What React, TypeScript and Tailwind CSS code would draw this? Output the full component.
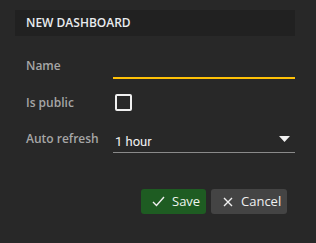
import React from "react";

export default function App() {
  return (
    <div className="w-[316px] h-[243px] bg-[#282828] pt-[10px] pl-[15px] overflow-hidden" style={{ fontFamily: '"Open Sans", sans-serif' }}>
      <div className="w-[280px] h-[26px] bg-[#212121] pl-[11px] flex items-center">
        <span className="text-[12px] font-semibold text-[#e9ecef] leading-none tracking-[0px]">NEW DASHBOARD</span>
      </div>
      <div className="pl-[11px] w-[280px]">
        <div className="flex h-[26px] mt-[17px]">
          <div className="w-[87px] pt-[5px] text-[12px] leading-[16px] font-semibold text-[#a6a6a6]">Name</div>
          <div className="w-[182px] border-b-2 border-[#ffc107]"></div>
        </div>
        <div className="flex h-[32px] items-start">
          <div className="w-[87px] pt-[16px] text-[12px] leading-[16px] font-semibold text-[#a6a6a6]">Is public</div>
          <div className="mt-[15px] ml-[2px] w-[17px] h-[17px] border-2 border-[#f0f0f0] rounded-[2px]"></div>
        </div>
        <div className="flex h-[42px]">
          <div className="w-[87px] pt-[20px] text-[12px] leading-[16px] font-semibold text-[#a6a6a6]">Auto refresh</div>
          <div className="w-[182px] mt-[17px] h-[25px] border-b border-[#8a8a8a] flex items-center justify-between pl-[2px] pr-[5px]">
            <span className="text-[13px] text-[#f2f2f2] pt-[4px]" style={{ fontFamily: 'Roboto, sans-serif' }}>1 hour</span>
            <svg width="11" height="6" viewBox="0 0 11 6" className="mt-[-3px]"><path d="M0 0 L11 0 L5.5 6 Z" fill="#f0f0f0" /></svg>
          </div>
        </div>
        <div className="flex justify-end gap-[5px] mt-[36px] w-[261px]">
          <button className="w-[65px] h-[25px] bg-[#1e5c22] rounded-[3px] flex items-center pl-[11px] text-[13px] text-[#eef5ee]">
            <svg width="13" height="11" viewBox="0 0 13 11" className="mr-[7px]"><path d="M1 6 L4.5 9.5 L12 1" stroke="#f0f0f0" strokeWidth="1.4" fill="none" /></svg>
            Save
          </button>
          <button className="w-[76px] h-[25px] bg-[#444444] rounded-[3px] flex items-center pl-[12px] text-[13px] text-[#f0f0f0]">
            <svg width="10" height="10" viewBox="0 0 10 10" className="mr-[8px]"><path d="M1 1 L9 9 M9 1 L1 9" stroke="#f0f0f0" strokeWidth="1.4" fill="none" /></svg>
            Cancel
          </button>
        </div>
      </div>
    </div>
  );
}
